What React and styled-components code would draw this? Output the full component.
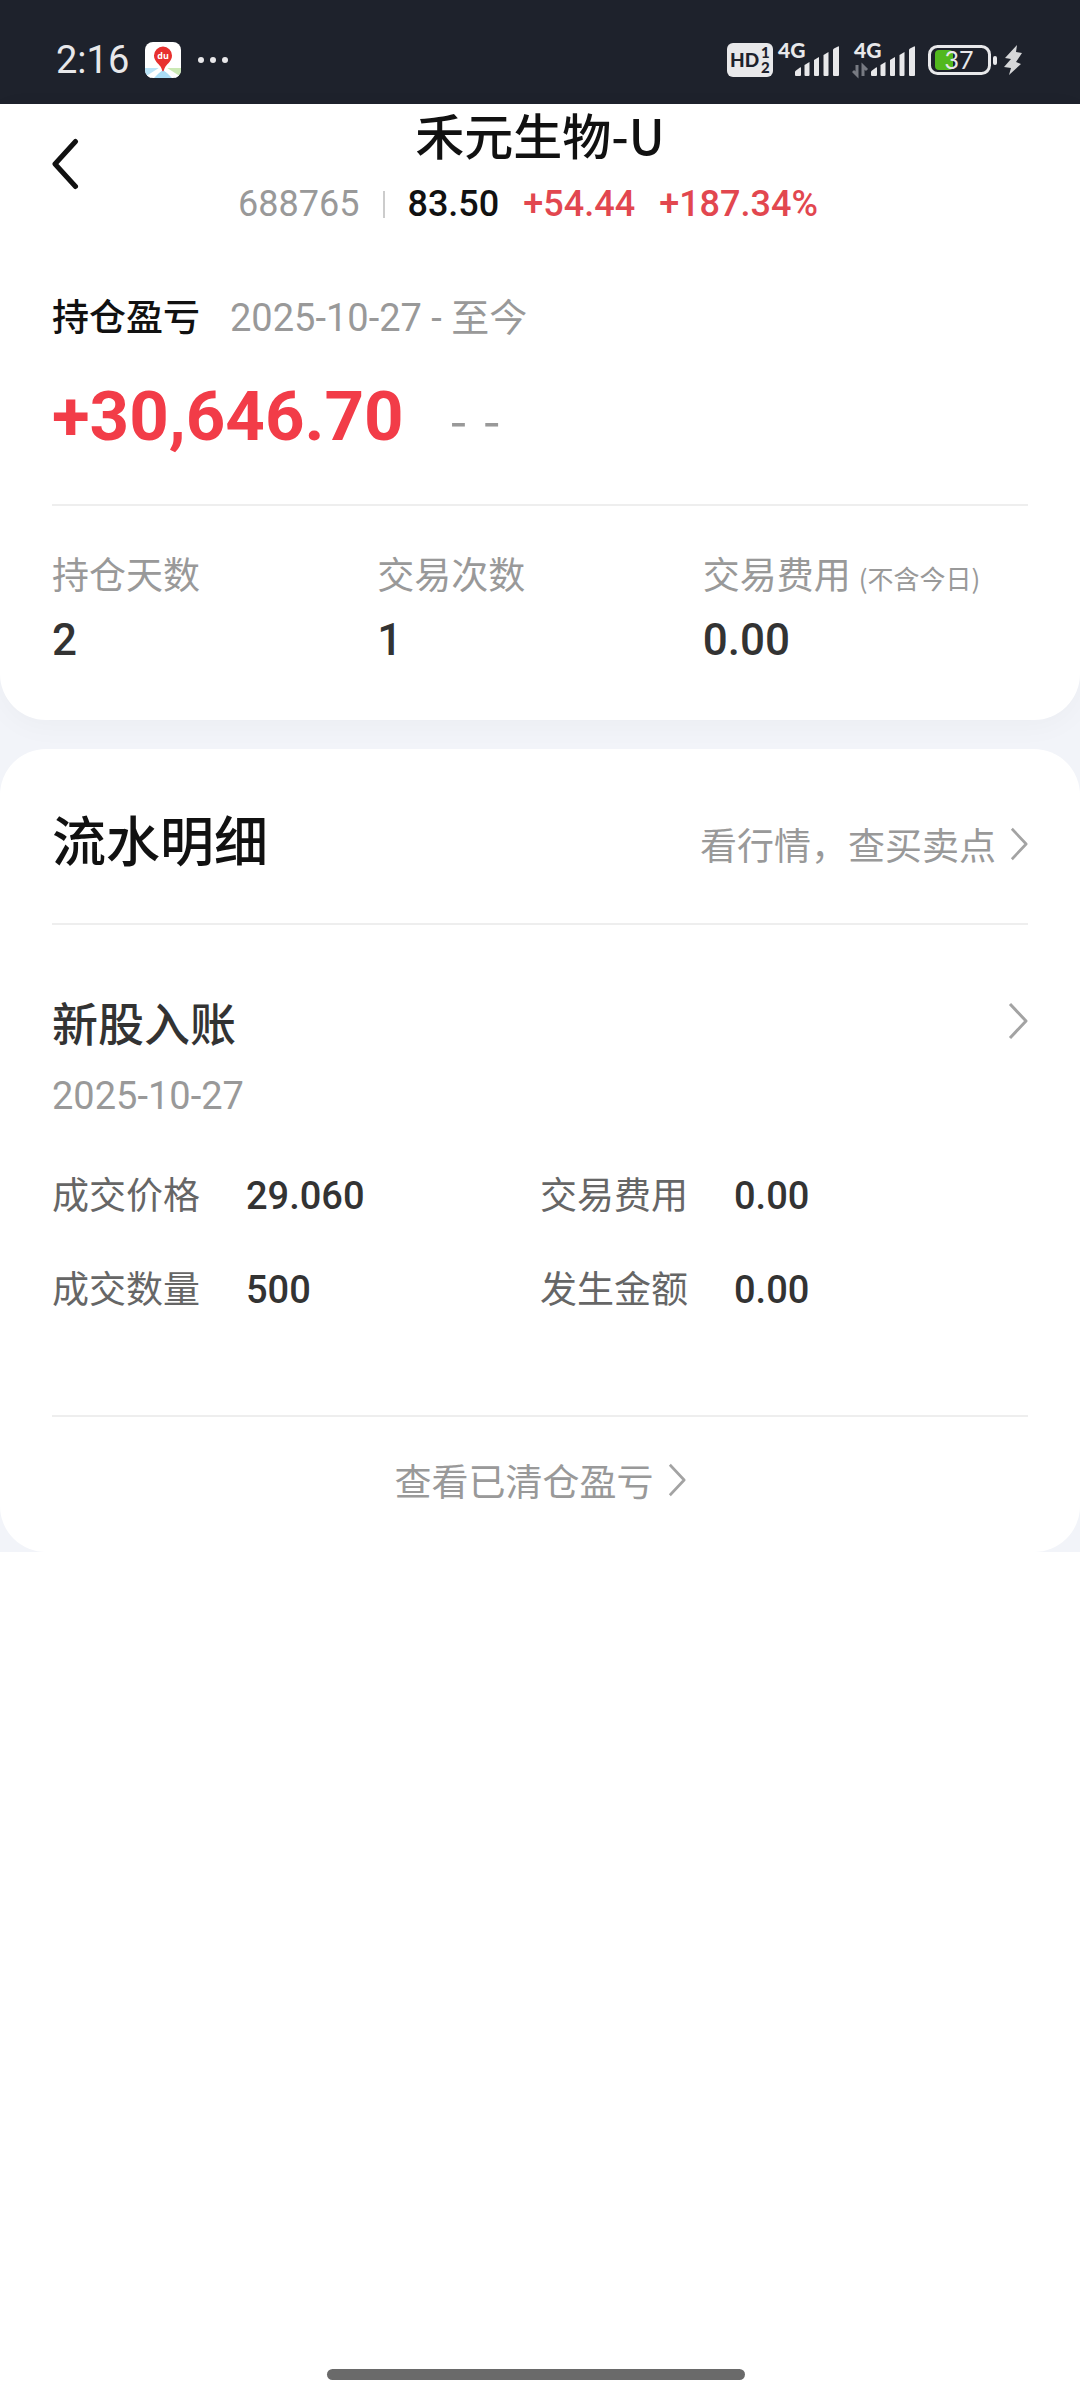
import React from 'react';
import styled, { createGlobalStyle, ThemeProvider } from 'styled-components';

const theme = {
  title: '#111111',
  text: '#333333',
  label: '#666666',
  muted: '#999999',
  red: '#f23c48',
  priceRed: '#e2474f',
  line: '#eeeeee',
  background: '#f2f4f9',
  statusBar: '#1e222c',
  statusIcon: '#e8e8ea',
  textFont: "'Noto Sans CJK SC', sans-serif",
  numberFont: "Roboto, 'Noto Sans CJK SC', sans-serif",
};

const GlobalStyle = createGlobalStyle`
  * {
    box-sizing: border-box;
  }

  body {
    margin: 0;
    background-color: #ffffff;
    font-family: ${theme.textFont};
  }
`;

const Page = styled.div`
  display: flex;
  flex-direction: column;
  min-height: 100vh;
`;

const StatusBar = styled.div`
  display: flex;
  align-items: center;
  justify-content: space-between;
  height: 104px;
  padding: 16px 56px 0;
  color: ${(props) => props.theme.statusIcon};
  background-color: ${(props) => props.theme.statusBar};
`;

const StatusGroup = styled.div`
  display: flex;
  align-items: center;
  gap: ${(props) => props.$gap};
`;

const Clock = styled.time`
  font-family: ${(props) => props.theme.numberFont};
  font-size: 38px;
  line-height: 40px;
`;

const Content = styled.main`
  display: flex;
  flex-direction: column;
  gap: 29px;
  background-color: ${(props) => props.theme.background};
`;

const Card = styled.section`
  padding: 0 52px;
  background-color: #ffffff;
  border-radius: ${(props) => (props.$first ? '0 0 46px 46px' : '46px')};
  box-shadow: ${(props) => (props.$first ? '0 6px 30px rgba(0, 0, 0, 0.03)' : 'none')};
`;

const Header = styled.header`
  display: grid;
  grid-template-columns: 48px 1fr 48px;
`;

const BackButton = styled.button`
  align-self: center;
  display: flex;
  padding: 0 0 12px;
  border: none;
  background: none;
`;

const HeaderCenter = styled.div`
  display: flex;
  flex-direction: column;
  align-items: center;
`;

const StockName = styled.h1`
  margin: 0;
  color: ${(props) => props.theme.title};
  font-size: 49px;
  font-weight: 500;
  line-height: 60px;
`;

const Quote = styled.div`
  display: flex;
  align-items: center;
  padding-top: 8px;
  font-family: ${(props) => props.theme.numberFont};
  font-size: 36px;
  line-height: 64px;
`;

const QuoteItem = styled.span`
  padding-right: 24px;
  color: ${(props) => props.theme[props.$color]};
  font-weight: ${(props) => (props.$color === 'muted' ? 400 : 500)};
`;

const QuoteDivider = styled.span`
  width: 2px;
  height: 27px;
  margin-right: 22px;
  background-color: #cccccc;
`;

const ProfitHead = styled.div`
  display: flex;
  align-items: baseline;
  gap: 30px;
  padding-top: 52px;
  line-height: 54px;
`;

const ProfitTitle = styled.h2`
  margin: 0;
  color: ${(props) => props.theme.title};
  font-size: 37px;
  font-weight: 500;
`;

const Period = styled.span`
  color: ${(props) => props.theme.muted};
  font-family: ${(props) => props.theme.numberFont};
  font-size: 38px;
`;

const ProfitRow = styled.div`
  display: flex;
  align-items: center;
  gap: 46px;
  padding: 30px 0 45px;
  border-bottom: 2px solid ${(props) => props.theme.line};
`;

const Profit = styled.strong`
  color: ${(props) => props.theme.red};
  font-family: ${(props) => props.theme.numberFont};
  font-size: 69px;
  font-weight: 700;
  line-height: 84px;
`;

const Rate = styled.span`
  display: flex;
  gap: 16px;
  color: ${(props) => props.theme.muted};
  font-size: 50px;
  line-height: 60px;
`;

const Stats = styled.dl`
  display: grid;
  grid-template-columns: repeat(3, 1fr);
  margin: 0;
  padding: 40px 0 50px;
`;

const StatLabel = styled.dt`
  color: ${(props) => props.theme.muted};
  font-size: 37px;
  line-height: 54px;
  white-space: nowrap;
`;

const StatNote = styled.small`
  margin-left: 8px;
  font-size: 26px;
  line-height: 26px;
`;

const StatValue = styled.dd`
  margin: 0;
  padding-top: 10px;
  color: ${(props) => props.theme.text};
  font-family: ${(props) => props.theme.numberFont};
  font-size: 44px;
  font-weight: 500;
  line-height: 60px;
`;

const DetailHead = styled.div`
  display: flex;
  align-items: flex-end;
  justify-content: space-between;
  padding: 50px 0 44px;
  border-bottom: 2px solid ${(props) => props.theme.line};
`;

const DetailTitle = styled.h2`
  margin: 0;
  color: ${(props) => props.theme.title};
  font-size: 54px;
  font-weight: 500;
  line-height: 80px;
`;

const MoreLink = styled.a`
  display: flex;
  align-items: center;
  justify-content: center;
  gap: 14px;
  padding-bottom: 8px;
  color: ${(props) => props.theme.muted};
  font-size: 37px;
  line-height: 54px;
  text-decoration: none;
`;

const Trade = styled.a`
  display: block;
  padding: 62px 0 98px;
  border-bottom: 2px solid ${(props) => props.theme.line};
  color: ${(props) => props.theme.text};
  text-decoration: none;
`;

const TradeHead = styled.div`
  display: flex;
  align-items: center;
  justify-content: space-between;
`;

const TradeName = styled.h3`
  margin: 0;
  font-size: 46px;
  font-weight: 500;
  line-height: 68px;
`;

const TradeDate = styled.time`
  display: block;
  padding-top: 14px;
  color: ${(props) => props.theme.muted};
  font-family: ${(props) => props.theme.numberFont};
  font-size: 38px;
  line-height: 54px;
`;

const Fields = styled.dl`
  display: grid;
  grid-template-columns: repeat(2, 1fr);
  row-gap: 37px;
  margin: 0;
  padding-top: 43px;
`;

const Field = styled.div`
  display: flex;
  align-items: baseline;
  gap: 46px;
  line-height: 54px;
`;

const FieldLabel = styled.dt`
  color: ${(props) => props.theme.label};
  font-size: 37px;
`;

const FieldValue = styled.dd`
  margin: 0;
  font-family: ${(props) => props.theme.numberFont};
  font-size: 38px;
  font-weight: 500;
`;

const CardFooter = styled.div`
  padding: 36px 0 37px;
`;

const HomeBar = styled.div`
  width: 418px;
  max-width: 60%;
  height: 11px;
  margin: auto 31% 20px auto;
  border-radius: 6px;
  background-color: #6a6a6a;
`;

const MapIcon = () => (
  <svg width="36" height="36" viewBox="0 0 36 36" aria-hidden="true">
    <clipPath id="map-clip">
      <rect width="36" height="36" rx="8" />
    </clipPath>
    <g clipPath="url(#map-clip)">
      <rect width="36" height="36" fill="#ffffff" />
      <path d="M0 26h15L0 36z" fill="#b9e3f7" />
      <path d="M36 26H21l15 10z" fill="#cbe9b4" />
      <path d="M18 27L9 36h18z" fill="#a9dcf6" />
      <path d="M2 36L16 27M34 36L20 27" stroke="#ffffff" strokeWidth="4" />
      <path d="M18 29.500c-.8 0-1-2.500-2.500-5C13.500 21.500 9 19 9 13.500a9 9 0 0 1 18 0c0 5.500-4.500 8-6.500 11-1.500 2.500-1.700 5-2.500 5z" fill="#e8302f" />
      <text x="18" y="17" textAnchor="middle" fontFamily="Open Sans, sans-serif" fontSize="9" fontWeight="700" fill="#ffffff">
        du
      </text>
    </g>
  </svg>
);

const DotsIcon = () => (
  <svg width="32" height="8" viewBox="0 0 32 8" fill="currentColor" aria-hidden="true">
    <circle cx="4" cy="4" r="3" />
    <circle cx="16" cy="4" r="3" />
    <circle cx="28" cy="4" r="3" />
  </svg>
);

const HdIcon = () => (
  <svg width="46" height="34" viewBox="0 0 46 34" fontFamily="Lato, sans-serif" fontWeight="900" aria-hidden="true">
    <rect width="46" height="34" rx="6" fill="currentColor" />
    <g fill={theme.statusBar}>
      <text x="3" y="24" fontSize="19">HD</text>
      <text x="34" y="15" fontSize="15">1</text>
      <text x="34" y="30" fontSize="15">2</text>
    </g>
  </svg>
);

const SignalIcon = ({ data }) => (
  <svg width="64" height="50" viewBox="0 -8 64 50" fill="currentColor" aria-hidden="true">
    <text x="2" y="15" fontFamily="Lato, sans-serif" fontSize="21" fontWeight="900">4G</text>
    <path d="M19 32v-3q0-1 1-1.500l4-3q1-.5 1 .5v7q0 1-1 1h-4q-1 0-1-1z" />
    <path d="M28.500 22l5-3v13q0 1-1 1h-3q-1 0-1-1z" />
    <path d="M38 17l5-3v18q0 1-1 1h-3q-1 0-1-1z" />
    <path d="M47.500 12l5-3v23q0 1-1 1h-3q-1 0-1-1z" />
    <path d="M57 7q0-1 1-1.500l4-2q1-.5 1 .5v28q0 1-1 1h-4q-1 0-1-1z" />
    {data && (
      <path d="M5 22v10L1 28M11 33V23l4 4" fill="none" stroke="#777a82" strokeWidth="3" />
    )}
  </svg>
);

const BatteryIcon = () => (
  <svg width="96" height="32" viewBox="0 0 96 32" fill="currentColor" aria-hidden="true">
    <rect x="1.500" y="2.500" width="60" height="27" rx="8" fill="none" stroke="currentColor" strokeWidth="3" />
    <rect x="7" y="6" width="18" height="20" rx="4" fill="#52b81e" />
    <text x="31" y="25" textAnchor="middle" fontFamily="Lato, sans-serif" fontSize="25">37</text>
    <rect x="65" y="12" width="4" height="9" rx="2" />
    <path d="M89 1L77 14l6 1-7 8 7 1-2 7 12-11-5-2 6-9-6-1z" fill="#d6d7d9" />
  </svg>
);

const BackIcon = () => (
  <svg width="28" height="54" viewBox="0 0 28 54" fill="none" aria-hidden="true">
    <path d="M23.500 4.500L3 27l20.500 22.500" stroke="#111111" strokeWidth="5" strokeLinecap="round" strokeLinejoin="round" />
  </svg>
);

const ChevronIcon = ({ large }) => (
  <svg width={large ? 20 : 18} height={large ? 40 : 34} viewBox="0 0 20 38" fill="none" aria-hidden="true">
    <path d="M2 2l16 17L2 36" stroke="#a3a3a3" strokeWidth="3" strokeLinejoin="round" />
  </svg>
);

const stats = [
  { label: '持仓天数', value: '2' },
  { label: '交易次数', value: '1' },
  { label: '交易费用', note: '(不含今日)', value: '0.00' },
];

const fields = [
  { label: '成交价格', value: '29.060' },
  { label: '交易费用', value: '0.00' },
  { label: '成交数量', value: '500' },
  { label: '发生金额', value: '0.00' },
];

const App = () => {
  return (
    <ThemeProvider theme={theme}>
      <GlobalStyle />
      <Page>
        <StatusBar>
          <StatusGroup $gap="16px">
            <Clock>2:16</Clock>
            <MapIcon />
            <DotsIcon />
          </StatusGroup>
          <StatusGroup $gap="12px">
            <StatusGroup $gap="3px">
              <HdIcon />
              <SignalIcon />
            </StatusGroup>
            <SignalIcon data />
            <BatteryIcon />
          </StatusGroup>
        </StatusBar>
        <Content>
          <Card $first>
            <Header>
              <BackButton aria-label="返回">
                <BackIcon />
              </BackButton>
              <HeaderCenter>
                <StockName>禾元生物-U</StockName>
                <Quote>
                  <QuoteItem $color="muted">688765</QuoteItem>
                  <QuoteDivider />
                  <QuoteItem $color="title">83.50</QuoteItem>
                  <QuoteItem $color="priceRed">+54.44</QuoteItem>
                  <QuoteItem $color="priceRed">+187.34%</QuoteItem>
                </Quote>
              </HeaderCenter>
            </Header>
            <ProfitHead>
              <ProfitTitle>持仓盈亏</ProfitTitle>
              <Period>2025-10-27 - 至今</Period>
            </ProfitHead>
            <ProfitRow>
              <Profit>+30,646.70</Profit>
              <Rate>
                <span>-</span>
                <span>-</span>
              </Rate>
            </ProfitRow>
            <Stats>
              {stats.map((stat) => (
                <div key={stat.label}>
                  <StatLabel>
                    {stat.label}
                    {stat.note && <StatNote>{stat.note}</StatNote>}
                  </StatLabel>
                  <StatValue>{stat.value}</StatValue>
                </div>
              ))}
            </Stats>
          </Card>
          <Card>
            <DetailHead>
              <DetailTitle>流水明细</DetailTitle>
              <MoreLink href="#quote">
                看行情，查买卖点
                <ChevronIcon />
              </MoreLink>
            </DetailHead>
            <Trade href="#trade">
              <TradeHead>
                <TradeName>新股入账</TradeName>
                <ChevronIcon large />
              </TradeHead>
              <TradeDate>2025-10-27</TradeDate>
              <Fields>
                {fields.map((field) => (
                  <Field key={field.label}>
                    <FieldLabel>{field.label}</FieldLabel>
                    <FieldValue>{field.value}</FieldValue>
                  </Field>
                ))}
              </Fields>
            </Trade>
            <CardFooter>
              <MoreLink href="#cleared">
                查看已清仓盈亏
                <ChevronIcon />
              </MoreLink>
            </CardFooter>
          </Card>
        </Content>
        <HomeBar />
      </Page>
    </ThemeProvider>
  );
};

export default App;
